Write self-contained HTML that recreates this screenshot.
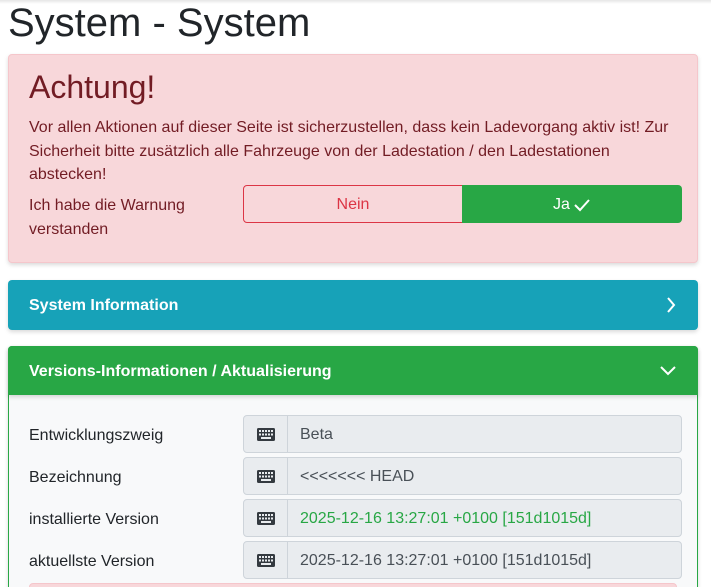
<!DOCTYPE html>
<html><head><meta charset="utf-8"><style>
*{box-sizing:border-box;margin:0;padding:0}
html,body{width:711px;height:587px;overflow:hidden}
body{background:#fff;font-family:"Liberation Sans",Arial,sans-serif;color:#212529;position:relative}
.abs{position:absolute}
h1{position:absolute;left:8px;top:-1px;font-size:40px;font-weight:400;line-height:48px;color:#212529}
.alert{left:8px;top:54px;width:690px;height:209px;background:#f8d7da;border:1px solid #f5c6cb;border-radius:4px;box-shadow:0 2px 4px rgba(0,0,0,.15);color:#721c24}
.alert h2{position:absolute;left:20px;top:13px;font-size:32px;font-weight:400;line-height:38px}
.alert p{position:absolute;left:20px;top:61px;width:660px;font-size:16px;line-height:23.5px}
.lbl{font-size:16px;line-height:24px}
.btn{top:185px;height:38px;font-size:16px;display:flex;align-items:center;justify-content:center;padding-top:2px}
.card{left:8px;width:690px;border-radius:4px;box-shadow:0 2px 4px rgba(0,0,0,.15)}
.hdr{color:#fff;font-weight:700;font-size:16px;padding-left:21px;display:flex;align-items:center;padding-top:2px}
.ig{left:243px;width:439px;height:38px;border:1px solid #ced4da;border-radius:4px;background:#e9ecef;display:flex;align-items:center}
.ig .ic{width:44px;height:100%;border-right:1px solid #ced4da;display:flex;align-items:center;justify-content:center}
.ig .tx{padding-left:12px;font-size:16px;color:#495057;padding-top:2px}
.rl{left:29px;font-size:16px}
</style></head><body>
<div class="abs" style="left:0;top:0;width:711px;height:4px;background:linear-gradient(#e6e6e6,#fff)"></div>
<h1>System - System</h1>
<div class="abs alert">
<h2>Achtung!</h2>
<p>Vor allen Aktionen auf dieser Seite ist sicherzustellen, dass kein Ladevorgang aktiv ist! Zur Sicherheit bitte zusätzlich alle Fahrzeuge von der Ladestation / den Ladestationen abstecken!</p>
</div>
<div class="abs lbl" style="left:29px;top:194px;color:#721c24">Ich habe die Warnung<br>verstanden</div>
<div class="abs btn" style="left:243px;width:220px;border:1px solid #dc3545;border-radius:4px 0 0 4px;color:#dc3545">Nein</div>
<div class="abs btn" style="left:462px;width:220px;background:#28a745;border-radius:0 4px 4px 0;color:#fff">Ja<svg width="18" height="14" viewBox="0 0 18 14" style="margin-left:3px"><path d="M2 7l5 5L16 2" stroke="#fff" stroke-width="2" fill="none"/></svg></div>
<div class="abs card hdr" style="top:280px;height:50px;background:#17a2b8">System Information
<svg class="abs" style="left:658px;top:17px" width="10" height="16" viewBox="0 0 10 16"><path d="M2 1l6 7-6 7" stroke="#fff" stroke-width="2" fill="none"/></svg></div>
<div class="abs card" style="top:346px;height:260px;background:#f8f9fa;border:1px solid #28a745"></div>
<div class="abs card hdr" style="top:346px;height:49px;background:#28a745;border-radius:4px 4px 0 0">Versions-Informationen / Aktualisierung
<svg class="abs" style="left:652px;top:18px" width="16" height="12" viewBox="0 0 16 12"><path d="M1 3l7 7 7-7" stroke="#fff" stroke-width="2" fill="none"/></svg></div>
<div class="abs rl" style="top:427px">Entwicklungszweig</div>
<div class="abs rl" style="top:469px">Bezeichnung</div>
<div class="abs rl" style="top:511px">installierte Version</div>
<div class="abs rl" style="top:553px">aktuellste Version</div>
<div class="abs ig" style="top:415px"><div class="ic"><svg width="18" height="13" viewBox="0 0 18 13"><rect x="0" y="0" width="18" height="13" rx="1.5" fill="#343a40"/><g fill="#e9ecef"><rect x="2" y="2" width="2" height="2"/><rect x="5" y="2" width="2" height="2"/><rect x="8" y="2" width="2" height="2"/><rect x="11" y="2" width="2" height="2"/><rect x="14" y="2" width="2" height="2"/><rect x="2" y="5.5" width="2" height="2"/><rect x="5" y="5.5" width="2" height="2"/><rect x="8" y="5.5" width="2" height="2"/><rect x="11" y="5.5" width="2" height="2"/><rect x="14" y="5.5" width="2" height="2"/><rect x="4" y="9" width="10" height="2"/></g></svg></div><div class="tx">Beta</div></div>
<div class="abs ig" style="top:457px"><div class="ic"><svg width="18" height="13" viewBox="0 0 18 13"><rect x="0" y="0" width="18" height="13" rx="1.5" fill="#343a40"/><g fill="#e9ecef"><rect x="2" y="2" width="2" height="2"/><rect x="5" y="2" width="2" height="2"/><rect x="8" y="2" width="2" height="2"/><rect x="11" y="2" width="2" height="2"/><rect x="14" y="2" width="2" height="2"/><rect x="2" y="5.5" width="2" height="2"/><rect x="5" y="5.5" width="2" height="2"/><rect x="8" y="5.5" width="2" height="2"/><rect x="11" y="5.5" width="2" height="2"/><rect x="14" y="5.5" width="2" height="2"/><rect x="4" y="9" width="10" height="2"/></g></svg></div><div class="tx">&lt;&lt;&lt;&lt;&lt;&lt;&lt; HEAD</div></div>
<div class="abs ig" style="top:499px"><div class="ic"><svg width="18" height="13" viewBox="0 0 18 13"><rect x="0" y="0" width="18" height="13" rx="1.5" fill="#343a40"/><g fill="#e9ecef"><rect x="2" y="2" width="2" height="2"/><rect x="5" y="2" width="2" height="2"/><rect x="8" y="2" width="2" height="2"/><rect x="11" y="2" width="2" height="2"/><rect x="14" y="2" width="2" height="2"/><rect x="2" y="5.5" width="2" height="2"/><rect x="5" y="5.5" width="2" height="2"/><rect x="8" y="5.5" width="2" height="2"/><rect x="11" y="5.5" width="2" height="2"/><rect x="14" y="5.5" width="2" height="2"/><rect x="4" y="9" width="10" height="2"/></g></svg></div><div class="tx" style="color:#28a745">2025-12-16 13:27:01 +0100 [151d1015d]</div></div>
<div class="abs ig" style="top:541px"><div class="ic"><svg width="18" height="13" viewBox="0 0 18 13"><rect x="0" y="0" width="18" height="13" rx="1.5" fill="#343a40"/><g fill="#e9ecef"><rect x="2" y="2" width="2" height="2"/><rect x="5" y="2" width="2" height="2"/><rect x="8" y="2" width="2" height="2"/><rect x="11" y="2" width="2" height="2"/><rect x="14" y="2" width="2" height="2"/><rect x="2" y="5.5" width="2" height="2"/><rect x="5" y="5.5" width="2" height="2"/><rect x="8" y="5.5" width="2" height="2"/><rect x="11" y="5.5" width="2" height="2"/><rect x="14" y="5.5" width="2" height="2"/><rect x="4" y="9" width="10" height="2"/></g></svg></div><div class="tx">2025-12-16 13:27:01 +0100 [151d1015d]</div></div>
<div class="abs" style="left:29px;top:583px;width:648px;height:10px;background:#f8d7da;border:1px solid #f5c6cb;border-radius:4px"></div>
</body></html>
